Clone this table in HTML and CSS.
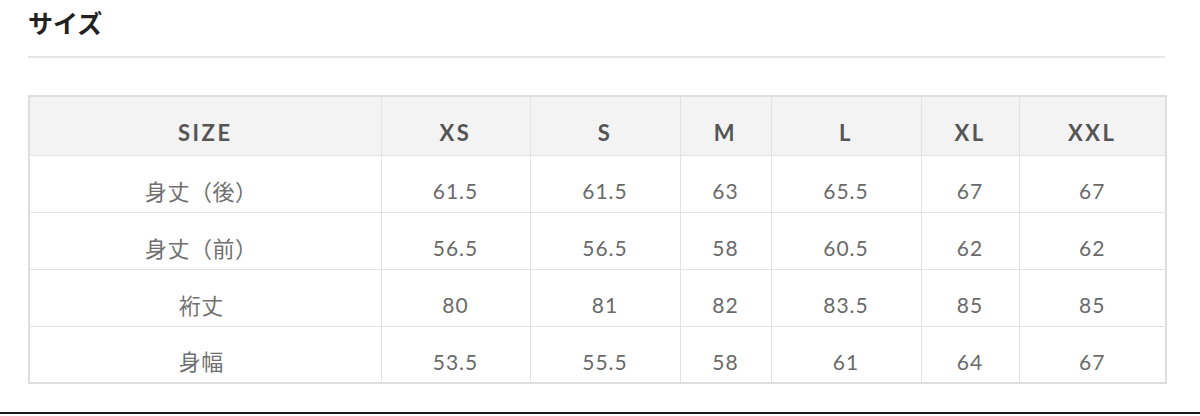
FILE: index.html
```html
<!DOCTYPE html>
<html lang="ja">
<head>
<meta charset="utf-8">
<title>サイズ</title>
<link rel="stylesheet" href="styles.css">
</head>
<body>
<div class="page">
  <section class="section">
    <h2 class="title">サイズ</h2>
    <div class="rule"></div>
    <table class="size-table">
      <colgroup>
        <col class="c1"><col class="c2"><col class="c3"><col class="c4"><col class="c5"><col class="c6"><col class="c7">
      </colgroup>
      <thead>
        <tr><th>SIZE</th><th>XS</th><th>S</th><th>M</th><th>L</th><th>XL</th><th>XXL</th></tr>
      </thead>
      <tbody>
        <tr><td class="jp">身丈（後）</td><td>61.5</td><td>61.5</td><td>63</td><td>65.5</td><td>67</td><td>67</td></tr>
        <tr><td class="jp">身丈（前）</td><td>56.5</td><td>56.5</td><td>58</td><td>60.5</td><td>62</td><td>62</td></tr>
        <tr><td class="jp">裄丈</td><td>80</td><td>81</td><td>82</td><td>83.5</td><td>85</td><td>85</td></tr>
        <tr><td class="jp">身幅</td><td>53.5</td><td>55.5</td><td>58</td><td>61</td><td>64</td><td>67</td></tr>
      </tbody>
    </table>
  </section>
  <div class="bottom-line"></div>
</div>
</body>
</html>
```

FILE: styles.css
```css
html, body {
  margin: 0;
  padding: 0;
  background: #fff;
}
.page {
  width: 1200px;
  height: 416px;
  display: flex;
  flex-direction: column;
}
.section {
  padding: 0 35px 0 28px;
  height: 412px;
  box-sizing: border-box;
}
.title {
  margin: 5px 0 0 0;
  font-family: "Noto Sans CJK JP", sans-serif;
  font-weight: 700;
  font-size: 25px;
  line-height: 34px;
  color: #222;
}
.rule {
  margin-top: 17px;
  height: 2px;
  background: #e6e6e6;
}
.size-table {
  margin-top: 37px;
  width: 1137px;
  border-collapse: collapse;
  table-layout: fixed;
  border: 2px solid #dedede;
}
.c1 { width: 352px; }
.c2 { width: 149px; }
.c3 { width: 150px; }
.c4 { width: 91px; }
.c5 { width: 150px; }
.c6 { width: 98px; }
.c7 { width: 147px; }
.size-table th,
.size-table td {
  border: 1px solid #e2e2e2;
  text-align: center;
  vertical-align: middle;
  padding: 15px 0 0 0;
  box-sizing: border-box;
}
.size-table th {
  height: 59px;
  background: #f3f3f3;
  font-family: "Lato", "Noto Sans", sans-serif;
  font-weight: 700;
  font-size: 22px;
  line-height: 28px;
  letter-spacing: 2.5px;
  color: #555;
}
.size-table td {
  height: 57px;
  font-family: "Lato", "Noto Sans CJK JP", sans-serif;
  font-weight: 400;
  font-size: 21px;
  line-height: 28px;
  letter-spacing: 1px;
  color: #6a6a6a;
}
.size-table td.jp {
  font-family: "Noto Sans CJK JP", sans-serif;
  font-weight: 400;
  letter-spacing: 0.5px;
  font-size: 22px;
  padding: 12px 8px 0 0;
  color: #707070;
  text-spacing-trim: space-all;
}
.bottom-line {
  height: 2px;
  background: #1a1a1a;
}
```
